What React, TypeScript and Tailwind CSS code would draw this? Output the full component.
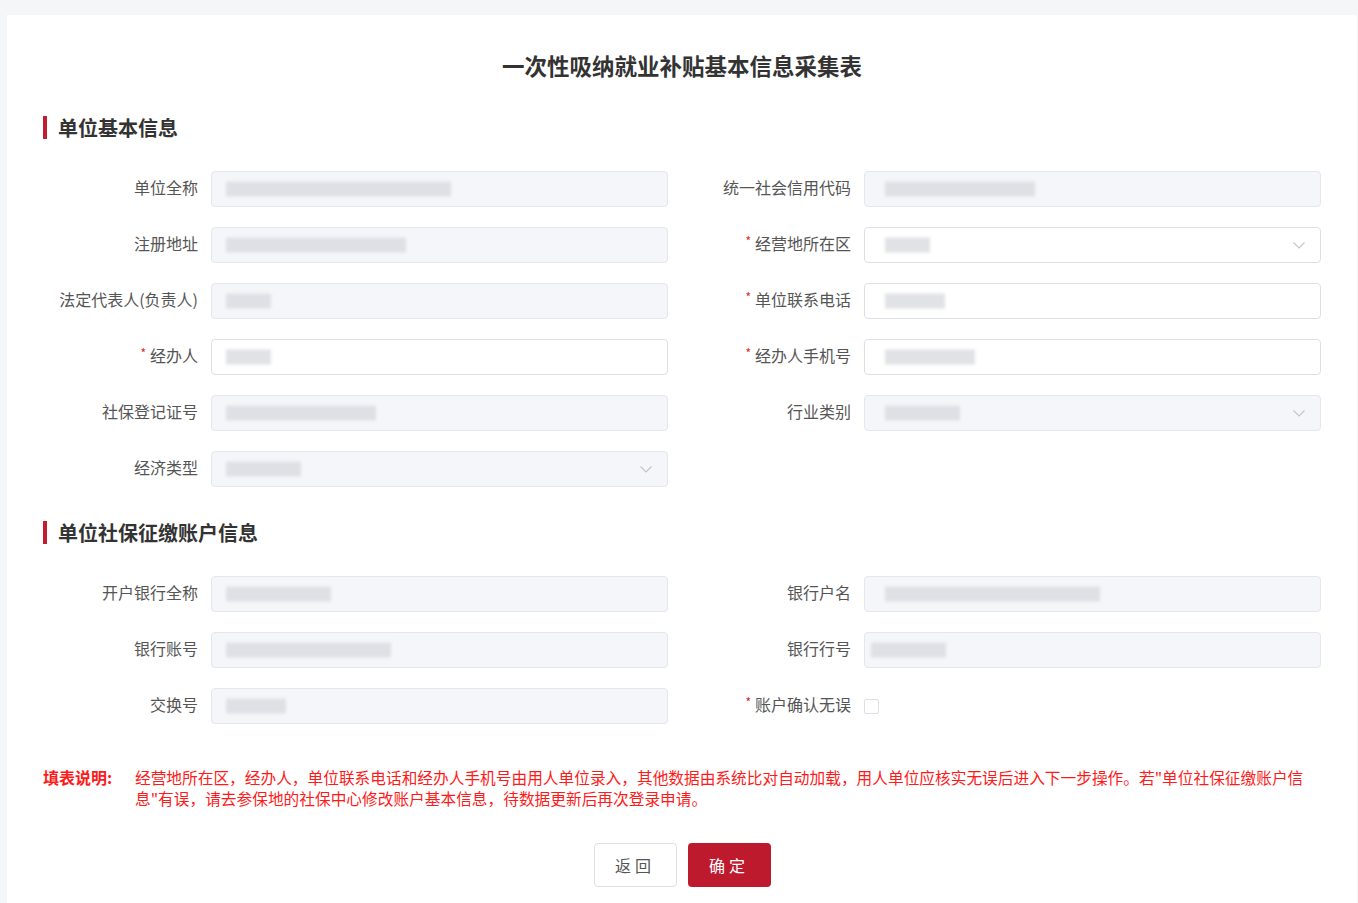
import React from "react";

const FONT = { fontFamily: '"Noto Sans CJK SC", "Noto Sans", sans-serif' };

type Field = {
  label: string;
  required?: boolean;
  kind: "disabled" | "input" | "select" | "selectDisabled" | "checkbox" | "empty";
  blur?: number;
  blurOffset?: number;
};

function Chevron() {
  return (
    <svg width="14" height="14" viewBox="0 0 14 14" className="absolute right-[14px] top-1/2 -translate-y-1/2">
      <path d="M1.5 4.5 L7 10 L12.5 4.5" fill="none" stroke="#c0c4cc" strokeWidth="1.1" />
    </svg>
  );
}

function BlurBlock({ w, offset = 14 }: { w: number; offset?: number }) {
  return (
    <div
      className="absolute top-1/2 -translate-y-1/2 h-[15px] bg-[#d9dbe0] blur-[1.5px] opacity-80"
      style={{ width: w, left: offset }}
    />
  );
}

function Control({ f }: { f: Field }) {
  if (f.kind === "empty") return <div className="flex-1" />;
  if (f.kind === "checkbox") {
    return (
      <div className="flex-1 flex items-center h-9">
        <div className="w-[15px] h-[15px] border border-[#dcdfe6] rounded-[2px] bg-white" />
      </div>
    );
  }
  const disabled = f.kind === "disabled" || f.kind === "selectDisabled";
  const select = f.kind === "select" || f.kind === "selectDisabled";
  return (
    <div
      className={
        "relative flex-1 h-9 rounded-[4px] border " +
        (disabled ? "bg-[#f5f6fa] border-[#e4e7ed]" : "bg-white border-[#dcdfe6]")
      }
    >
      {f.blur ? <BlurBlock w={f.blur} offset={f.blurOffset} /> : null}
      {select ? <Chevron /> : null}
    </div>
  );
}

function Row({ f }: { f: Field }) {
  return (
    <div className="flex items-center h-9">
      <div className="relative top-[-2px] w-[155px] mr-[13px] text-right text-[16px] text-[#555] leading-9 whitespace-nowrap">
        {f.required ? <span className="text-[#e02020] text-[12px] mr-[4px] align-top relative top-[-2px]">*</span> : null}
        {f.label}
      </div>
      <Control f={f} />
    </div>
  );
}

function Section({ title, className }: { title: string; className?: string }) {
  return (
    <div className={"flex items-center h-[23px] " + (className || "")}>
      <div className="w-[4px] h-[23px] bg-[#c01d2e]" />
      <div className="ml-[11px] text-[20px] font-bold text-[#333] leading-[23px]">{title}</div>
    </div>
  );
}

const basic: Field[] = [
  { label: "单位全称", kind: "disabled", blur: 225 },
  { label: "统一社会信用代码", kind: "disabled", blur: 150, blurOffset: 20 },
  { label: "注册地址", kind: "disabled", blur: 180 },
  { label: "经营地所在区", required: true, kind: "select", blur: 45, blurOffset: 20 },
  { label: "法定代表人(负责人)", kind: "disabled", blur: 45 },
  { label: "单位联系电话", required: true, kind: "input", blur: 60, blurOffset: 20 },
  { label: "经办人", required: true, kind: "input", blur: 45 },
  { label: "经办人手机号", required: true, kind: "input", blur: 90, blurOffset: 20 },
  { label: "社保登记证号", kind: "disabled", blur: 150 },
  { label: "行业类别", kind: "selectDisabled", blur: 75, blurOffset: 20 },
  { label: "经济类型", kind: "selectDisabled", blur: 75 },
  { label: "", kind: "empty" },
];

const account: Field[] = [
  { label: "开户银行全称", kind: "disabled", blur: 105 },
  { label: "银行户名", kind: "disabled", blur: 215, blurOffset: 20 },
  { label: "银行账号", kind: "disabled", blur: 165 },
  { label: "银行行号", kind: "disabled", blur: 75, blurOffset: 6 },
  { label: "交换号", kind: "disabled", blur: 60 },
  { label: "账户确认无误", required: true, kind: "checkbox" },
];

export default function App() {
  return (
    <div className="min-h-[903px] bg-[#f5f6f8] pt-[15px] pl-[7px] pr-[1px]" style={FONT}>
      <div className="bg-white min-h-[900px] pt-[35px] px-[36px]">
        <h1 className="text-center text-[22.5px] font-bold text-[#333] leading-[30px]">
          一次性吸纳就业补贴基本信息采集表
        </h1>
        <Section title="单位基本信息" className="mt-[36px]" />
        <div className="grid grid-cols-2 gap-x-[28px] gap-y-[20px] mt-[32px] w-[1278px]">
          {basic.map((f, i) => (
            <Row key={i} f={f} />
          ))}
        </div>
        <Section title="单位社保征缴账户信息" className="mt-[34px]" />
        <div className="grid grid-cols-2 gap-x-[28px] gap-y-[20px] mt-[32px] w-[1278px]">
          {account.map((f, i) => (
            <Row key={i} f={f} />
          ))}
        </div>
        <div className="flex mt-[43px] text-[#ff1a1a] leading-[21px]">
          <div className="w-[92px] shrink-0 font-bold text-[16px]">填表说明:</div>
          <div className="w-[1178px] shrink-0 text-[15.7px]">
            经营地所在区，经办人，单位联系电话和经办人手机号由用人单位录入，其他数据由系统比对自动加载，用人单位应核实无误后进入下一步操作。若"单位社保征缴账户信息"有误，请去参保地的社保中心修改账户基本信息，待数据更新后再次登录申请。
          </div>
        </div>
        <div className="flex justify-center gap-[11px] mt-[34px]">
          <button className="w-[83px] h-[44px] rounded-[4px] border border-[#dcdfe6] bg-white text-[#555] text-[16px] tracking-[4px]">
            返回
          </button>
          <button className="w-[83px] h-[44px] rounded-[4px] bg-[#be1a2e] text-white text-[16px] tracking-[4px]">
            确定
          </button>
        </div>
      </div>
    </div>
  );
}
